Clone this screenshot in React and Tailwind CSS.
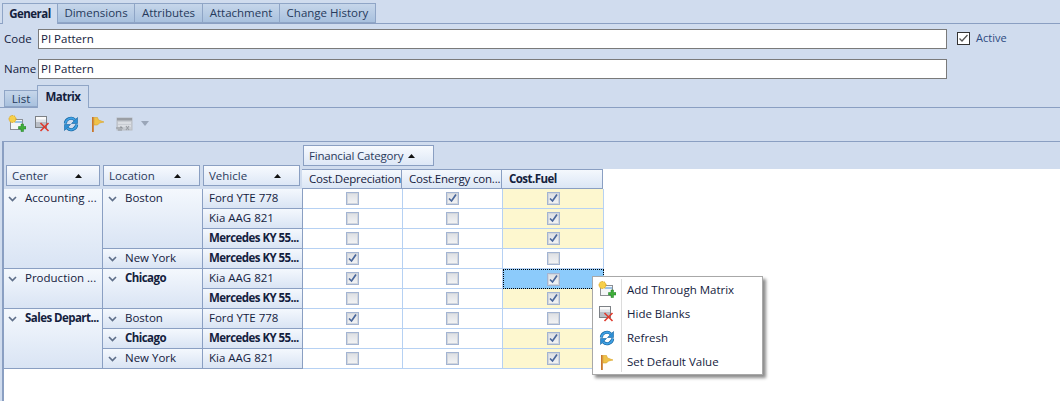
import clsx from 'clsx'

const topTabs = [
  { label: 'General', active: true, w: 'w-[56px]' },
  { label: 'Dimensions', w: 'w-[77px]' },
  { label: 'Attributes', w: 'w-[68px]' },
  { label: 'Attachment', w: 'w-[77px]' },
  { label: 'Change History', w: 'w-[96px]' },
]

const centers = [
  { label: 'Accounting ...', span: 'row-span-4' },
  { label: 'Production ...', span: 'row-span-2' },
  { label: 'Sales Depart...', span: 'row-span-3', bold: true },
]

const locations = [
  { label: 'Boston', span: 'row-span-3' },
  { label: 'New York', span: 'row-span-1' },
  { label: 'Chicago', span: 'row-span-2', bold: true },
  { label: 'Boston', span: 'row-span-1' },
  { label: 'Chicago', span: 'row-span-1', bold: true },
  { label: 'New York', span: 'row-span-1' },
]

const vehicles = [
  { label: 'Ford YTE 778' },
  { label: 'Kia AAG 821' },
  { label: 'Mercedes KY 55...', bold: true },
  { label: 'Mercedes KY 55...', bold: true },
  { label: 'Kia AAG 821' },
  { label: 'Mercedes KY 55...', bold: true },
  { label: 'Ford YTE 778' },
  { label: 'Mercedes KY 55...', bold: true },
  { label: 'Kia AAG 821' },
]

const depreciation = [0, 0, 0, 1, 1, 0, 1, 0, 0]
const energy = [1, 0, 0, 0, 0, 0, 0, 0, 0]
const fuel = [1, 1, 1, 0, 1, 1, 0, 1, 1]

function AddIcon() {
  return (
    <svg width="18" height="18" viewBox="0 0 18 18" className="block">
      <rect x="2.500" y="4.500" width="12" height="10" fill="#f4f6f8" stroke="#8b8f94" />
      <rect x="7" y="6" width="7" height="2" fill="#9cc3e6" />
      <circle cx="4.500" cy="4" r="3.500" fill="#f6cf4a" stroke="#d9a21c" strokeDasharray="1.500 1" />
      <path d="M10.500 11.500h2.500V9h2.500v2.500H18V14h-2.500v2.500H13V14h-2.500z" fill="#3fae3a" stroke="#1f7d22" strokeWidth="0.500" />
    </svg>
  )
}

function HideIcon() {
  return (
    <svg width="18" height="18" viewBox="0 0 18 18" className="block">
      <rect x="1.500" y="1.500" width="11" height="11" fill="#dfe3e8" stroke="#7d8186" />
      <rect x="2" y="2" width="10" height="2.500" fill="#fafafa" />
      <rect x="2" y="7" width="10" height="5" fill="#b9bec6" />
      <path d="M6.500 8l8 8M14.500 8l-8 8" stroke="#e0392b" strokeWidth="1.600" fill="none" />
    </svg>
  )
}

function RefreshIcon() {
  return (
    <svg width="18" height="18" viewBox="0 0 18 18" className="block">
      <path d="M3.300 8.500A5.700 5.700 0 0 1 12.800 4.800" fill="none" stroke="#17659f" strokeWidth="3" />
      <path d="M3.300 8.500A5.700 5.700 0 0 1 12.800 4.800" fill="none" stroke="#3fa2e6" strokeWidth="1.800" />
      <path d="M15.500 2.500v6H9.500z" fill="#2c8fd6" stroke="#17659f" strokeWidth="0.600" />
      <path d="M14.700 9.500A5.700 5.700 0 0 1 5.200 13.200" fill="none" stroke="#17659f" strokeWidth="3" />
      <path d="M14.700 9.500A5.700 5.700 0 0 1 5.200 13.200" fill="none" stroke="#3fa2e6" strokeWidth="1.800" />
      <path d="M2.500 15.500v-6h6z" fill="#2c8fd6" stroke="#17659f" strokeWidth="0.600" />
    </svg>
  )
}

function FlagIcon() {
  return (
    <svg width="18" height="18" viewBox="0 0 18 18" className="block">
      <rect x="3" y="2" width="1.800" height="15" fill="#c9782c" />
      <path d="M5 2.500h3.500l1 2.500 5.500 2-4.500 1-2 2H5z" fill="#efc24a" stroke="#d8a326" strokeWidth="0.600" />
    </svg>
  )
}

function DisabledIcon() {
  return (
    <svg width="20" height="18" viewBox="0 0 20 18" className="block">
      <rect x="2" y="3" width="15" height="12" fill="#c9cdd3" stroke="#b8bcc2" />
      <rect x="2" y="3" width="15" height="2.500" fill="#9a9ea4" />
      <path d="M3 8h13M3 11h13" stroke="#eceef1" />
      <path d="M1 13h6l-1.500-1.500M7 15H3" stroke="#8f9398" strokeWidth="1.200" fill="none" />
      <path d="M11 11l3 4M14 11l-3 4" stroke="#9a9ea4" strokeWidth="1.200" />
    </svg>
  )
}

function Chevron() {
  return (
    <svg width="9" height="6" viewBox="0 0 9 6" className="shrink-0 block">
      <path d="M1 1l3.500 3.500L8 1" fill="none" stroke="#5f6f89" strokeWidth="1.700" />
    </svg>
  )
}

function SortArrow() {
  return (
    <svg width="7" height="4" viewBox="0 0 7 4" className="shrink-0 block">
      <path d="M3.500 0L7 4H0z" fill="#111" />
    </svg>
  )
}

function MatrixCheck({ checked }) {
  return (
    <span className="flex h-[13px] w-[13px] items-center justify-center border border-[#a3b4d2] bg-white">
      <span className="flex h-[11px] w-[11px] items-center justify-center border border-[#d2d6dc] bg-gradient-to-b from-[#dfe1e5] to-[#f1f2f4]">
        {checked ? (
          <svg width="11" height="11" viewBox="0 0 11 11" className="block shrink-0">
            <path d="M2 5.500l2.500 2.500L9 1.500" fill="none" stroke="#4a679b" strokeWidth="1.700" />
          </svg>
        ) : null}
      </span>
    </span>
  )
}

function FilterButton({ label, className }) {
  return (
    <div
      className={clsx(
        'flex items-center justify-between whitespace-nowrap border border-[#8a9fc2] bg-gradient-to-b from-[#f7fafe] to-[#dde7f6] pl-[5px] text-[#2a3a5c]',
        className,
      )}
    >
      <span>{label}</span>
      <SortArrow />
    </div>
  )
}

function HeaderCell({ label, bold, span }) {
  return (
    <div
      className={clsx(
        'flex items-start overflow-hidden whitespace-nowrap border-b border-r border-[#8a9fc2] bg-gradient-to-b from-[#f4f8fd] to-[#d9e4f4] pl-[6px] pt-[1px] text-[#14213d]',
        span,
        bold && 'font-bold tracking-[-0.550px]',
      )}
    >
      {label}
    </div>
  )
}

function TreeCell({ label, bold, span, inset }) {
  return (
    <div
      className={clsx(
        'flex items-start overflow-hidden whitespace-nowrap border-b border-r border-[#8a9fc2] bg-gradient-to-b from-[#f4f8fd] to-[#d9e4f4] pt-[1px] text-[#14213d]',
        span,
        bold && 'font-bold tracking-[-0.550px]',
      )}
    >
      <span className={clsx('mt-[6px] mr-[8px]', inset)}>
        <Chevron />
      </span>
      {label}
    </div>
  )
}

function DataCell({ checked, yellow, selected }) {
  return (
    <div
      className={clsx(
        'flex items-center justify-center',
        selected
          ? 'border border-dotted border-black bg-[#8ccbfb]'
          : 'border-b border-r border-[#b6d1f3]',
        yellow && !selected && 'bg-[#fdf7cf]',
      )}
    >
      <MatrixCheck checked={checked} />
    </div>
  )
}

function MenuItem({ icon, label }) {
  return (
    <div className="flex h-[24px] items-center">
      <div className="flex w-[28px] shrink-0 justify-center">{icon}</div>
      <div className="ml-[6px] text-[#14213d]">{label}</div>
    </div>
  )
}

export default function App() {
  return (
    <div className="relative flex h-[401px] w-[1060px] flex-col overflow-hidden bg-[#d0dcee] font-['Open_Sans',sans-serif] text-[11.500px] leading-[16px] text-[#14213d]">
      {/* top tabs */}
      <div className="flex h-[24px] shrink-0 items-end border-b border-[#8a9fc2] pl-[2px]">
        {topTabs.map((t) => (
          <div
            key={t.label}
            className={clsx(
              'flex shrink-0 items-center justify-center border border-[#8fa5c6]',
              t.w,
              t.active
                ? '-mb-px h-[21px] border-b-0 bg-[#d0dcee] font-bold tracking-[-0.550px] text-[#14213d]'
                : 'h-[20px] border-l-0 bg-gradient-to-b from-[#c6d6ea] to-[#a9c1de] text-[#263a5c]',
            )}
          >
            {t.label}
          </div>
        ))}
      </div>

      {/* code / name form */}
      <div className="flex shrink-0 pt-[5px]">
        <div className="flex w-[947px] flex-col gap-[10px] pl-[4px]">
          <div className="flex items-center">
            <span className="w-[34px]">Code</span>
            <div className="flex h-[20px] flex-1 items-center border border-[#7a7a7a] bg-white pl-[2px]">PI Pattern</div>
          </div>
          <div className="flex items-center">
            <span className="w-[34px]">Name</span>
            <div className="flex h-[20px] flex-1 items-center border border-[#7a7a7a] bg-white pl-[2px]">PI Pattern</div>
          </div>
        </div>
        <div className="ml-[10px] flex h-[18px] items-center">
          <span className="flex h-[13px] w-[13px] items-center justify-center border border-[#333] bg-white">
            <svg width="11" height="11" viewBox="0 0 11 11" className="block shrink-0">
              <path d="M1.500 5.500l2.500 2.500L9.500 2" fill="none" stroke="#555" strokeWidth="1.300" />
            </svg>
          </span>
          <span className="ml-[6px] text-[11px] text-[#2d4a80]">Active</span>
        </div>
      </div>

      {/* list / matrix tabs */}
      <div className="mt-[6px] flex h-[23px] shrink-0 items-end border-b border-[#8a9fc2] pl-[4px]">
        <div className="flex h-[17px] w-[33px] items-center justify-center border border-r-0 border-[#8fa5c6] bg-gradient-to-b from-[#c6d6ea] to-[#a9c1de] text-[#263a5c]">
          List
        </div>
        <div className="-mb-px flex h-[23px] w-[52px] items-center justify-center border border-b-0 border-[#8fa5c6] bg-[#d0dcee] font-bold tracking-[-0.550px]">
          Matrix
        </div>
      </div>

      {/* toolbar */}
      <div className="flex h-[33px] shrink-0 items-center pb-[2px] pl-[8px]">
        <AddIcon />
        <div className="ml-[8px]">
          <HideIcon />
        </div>
        <div className="ml-[10px]">
          <RefreshIcon />
        </div>
        <div className="ml-[9px]">
          <FlagIcon />
        </div>
        <div className="ml-[8px]">
          <DisabledIcon />
        </div>
        <svg width="8" height="5" viewBox="0 0 8 5" className="ml-[6px] block">
          <path d="M0 0h8L4 5z" fill="#9aa6b8" />
        </svg>
      </div>

      {/* pivot grid */}
      <div className="ml-[2px] flex min-h-0 flex-1 flex-col border-l-2 border-t border-[#8a9fc2] bg-white">
        <div className="flex h-[47px] shrink-0">
          <div className="flex w-[298px] shrink-0 items-end gap-[3px] bg-[#d0dcee] pb-[3px] pl-[2px]">
            <FilterButton label="Center" className="h-[21px] w-[94px] pr-[17px]" />
            <FilterButton label="Location" className="h-[21px] w-[97px] pr-[18px]" />
            <FilterButton label="Vehicle" className="h-[21px] w-[97px] pr-[18px]" />
          </div>
          <div className="flex min-w-0 flex-1 flex-col">
            <div className="flex h-[27px] shrink-0 items-start bg-[#d0dcee] pl-[1px] pt-[3px]">
              <FilterButton label="Financial Category" className="h-[21px] w-[131px] pr-[18px] tracking-[-0.200px]" />
            </div>
            <div className="flex h-[20px] shrink-0">
              {['Cost.Depreciation', 'Cost.Energy con...', 'Cost.Fuel'].map((h, i) => (
                <div
                  key={h}
                  className={clsx(
                    'flex items-center overflow-hidden whitespace-nowrap border-b border-r border-t border-[#8a9fc2] bg-gradient-to-b from-[#f4f8fd] to-[#dbe6f5] pl-[7px]',
                    i === 2 ? 'w-[101px] font-bold tracking-[-0.550px]' : 'w-[100px] tracking-[-0.200px]',
                  )}
                >
                  {h}
                </div>
              ))}
            </div>
          </div>
        </div>

        <div className="grid w-[600px] grid-flow-col grid-cols-[99px_100px_100px_100px_100px_101px] grid-rows-[repeat(9,20px)]">
          {centers.map((c) => (
            <TreeCell key={c.label} inset="ml-[4px]" {...c} />
          ))}
          {locations.map((l, i) => (
            <TreeCell key={i} inset="ml-[5px]" {...l} />
          ))}
          {vehicles.map((v, i) => (
            <HeaderCell key={i} {...v} />
          ))}
          {depreciation.map((v, i) => (
            <DataCell key={i} checked={!!v} />
          ))}
          {energy.map((v, i) => (
            <DataCell key={i} checked={!!v} />
          ))}
          {fuel.map((v, i) => (
            <DataCell key={i} checked={!!v} yellow={!!v} selected={i === 4} />
          ))}
        </div>
      </div>

      {/* context menu */}
      <div className="absolute left-[592px] top-[276px] flex h-[99px] w-[171px] flex-col justify-center border border-[#a8a8a8] bg-white shadow-[3px_3px_3px_rgba(0,0,0,0.45)]">
        <div className="absolute bottom-[2px] left-[28px] top-[2px] w-px bg-[#dcdcdc]" />
        <MenuItem icon={<AddIcon />} label="Add Through Matrix" />
        <MenuItem icon={<HideIcon />} label="Hide Blanks" />
        <MenuItem icon={<RefreshIcon />} label="Refresh" />
        <MenuItem icon={<FlagIcon />} label="Set Default Value" />
      </div>
    </div>
  )
}
